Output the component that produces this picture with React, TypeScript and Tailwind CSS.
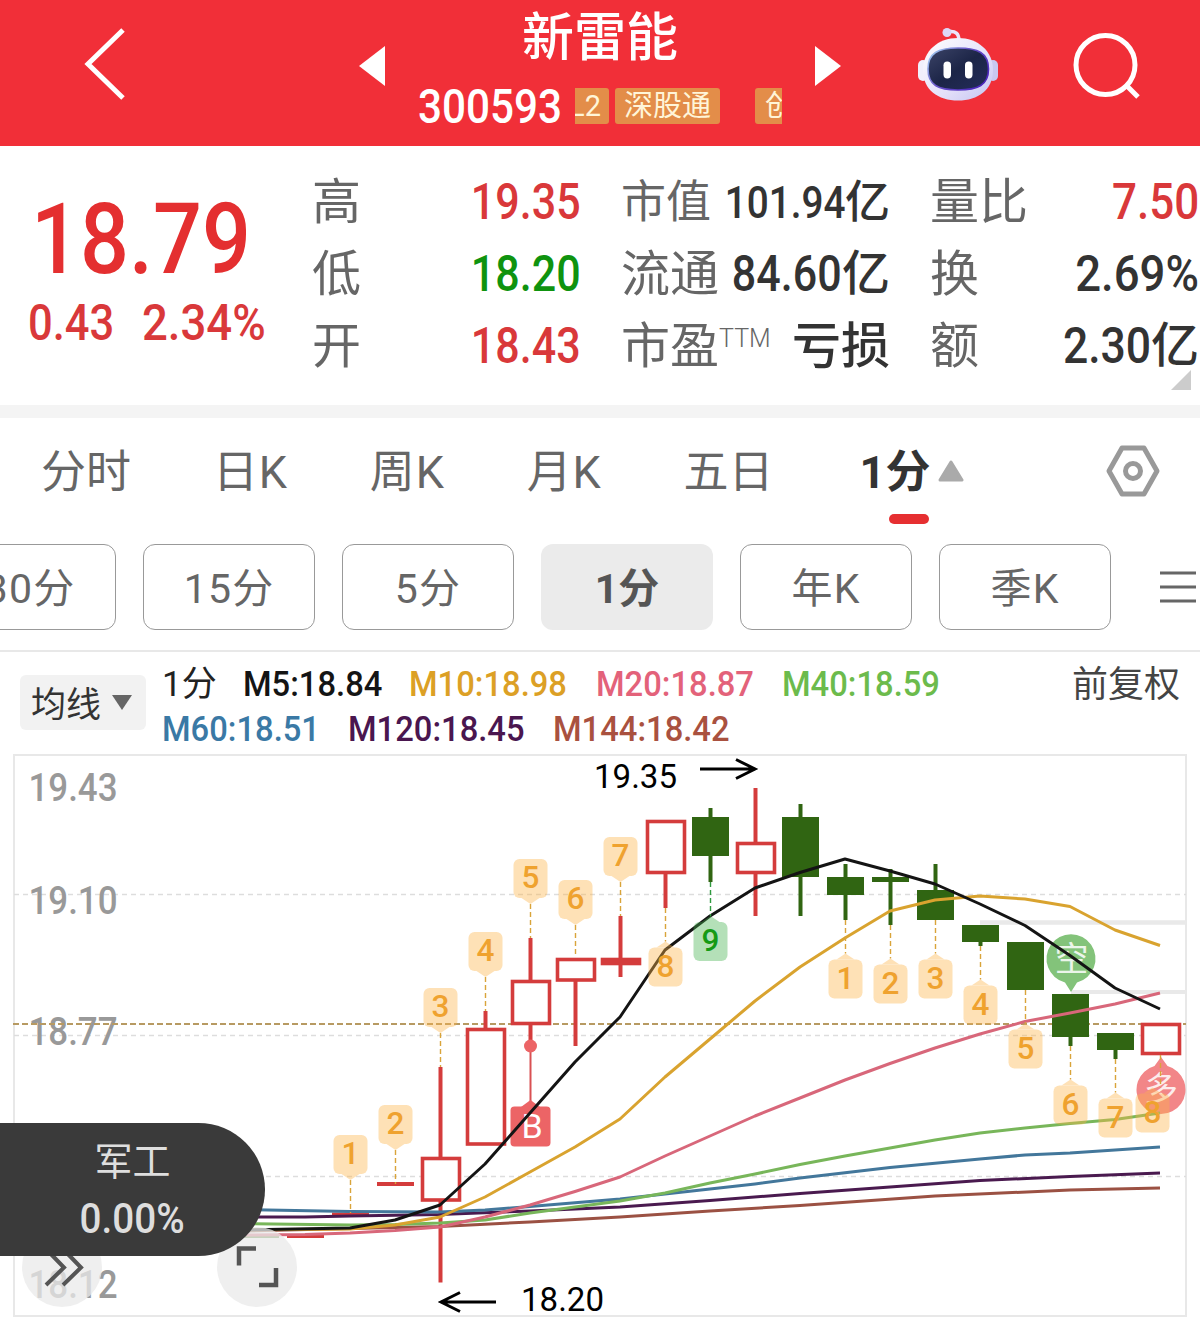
import type { ReactNode } from 'react'
import clsx from 'clsx'
import { twMerge } from 'tailwind-merge'

interface Candle {
  x: number
  top: number
  bottom: number
  high?: number
  low?: number
  up?: boolean
}

interface Marker {
  x: number
  label: string
  // y of the pointer tip and of the candle end it is tied to
  tip: number
  from: number
  below?: boolean
  green?: boolean
  boxX?: number
}

const candles: Candle[] = [
  { x: 440.5, top: 1156.5, bottom: 1202, high: 1067, low: 1282.5, up: true },
  { x: 485.5, top: 1027.5, bottom: 1146, high: 1011, up: true },
  { x: 530.5, top: 979.5, bottom: 1025.5, high: 938, low: 1046, up: true },
  { x: 575.5, top: 957.5, bottom: 982, low: 1046, up: true },
  { x: 620.5, top: 957.5, bottom: 965.5, high: 916, low: 977, up: true },
  { x: 665.5, top: 819.5, bottom: 874.5, low: 908, up: true },
  { x: 710.5, top: 817, bottom: 856, high: 808, low: 882 },
  { x: 755.5, top: 841.5, bottom: 874.5, high: 788, low: 916, up: true },
  { x: 800.5, top: 817, bottom: 877, high: 804, low: 916 },
  { x: 845.5, top: 877, bottom: 895, high: 864, low: 920 },
  { x: 890.5, top: 877, bottom: 882, high: 869, low: 925 },
  { x: 935.5, top: 890, bottom: 920, high: 864 },
  { x: 980.5, top: 925, bottom: 942, low: 946 },
  { x: 1025.5, top: 942, bottom: 990 },
  { x: 1070.5, top: 994, bottom: 1037, low: 1046 },
  { x: 1115.5, top: 1033, bottom: 1050, low: 1059 },
  { x: 1160.5, top: 1022.5, bottom: 1055.5, up: true },
]

const markers: Marker[] = [
  { x: 350.5, label: '1', tip: 1180, from: 1213 },
  { x: 395.5, label: '2', tip: 1150, from: 1184 },
  { x: 440.5, label: '3', tip: 1033, from: 1067 },
  { x: 485.5, label: '4', tip: 977, from: 1011 },
  { x: 530.5, label: '5', tip: 904, from: 938 },
  { x: 575.5, label: '6', tip: 925, from: 957 },
  { x: 620.5, label: '7', tip: 882, from: 916 },
  { x: 665.5, label: '8', tip: 941.5, from: 908, below: true },
  { x: 710.5, label: '9', tip: 916, from: 882, below: true, green: true },
  { x: 845.5, label: '1', tip: 953.5, from: 920, below: true },
  { x: 890.5, label: '2', tip: 958.5, from: 925, below: true },
  { x: 935.5, label: '3', tip: 953.5, from: 920, below: true },
  { x: 980.5, label: '4', tip: 979.5, from: 946, below: true },
  { x: 1025.5, label: '5', tip: 1023.5, from: 990, below: true },
  { x: 1070.5, label: '6', tip: 1079.5, from: 1046, below: true },
  { x: 1115.5, label: '7', tip: 1092.5, from: 1059, below: true },
  { x: 1160.5, label: '8', tip: 1087.5, from: 1055, below: true, boxX: 1152.5 },
]

const averages = [
  {
    color: '#9b5143',
    points: '240,1231 350,1228.5 440,1226.5 530,1222 620,1217 710,1211 800,1205.5 935,1196 1070,1190 1160,1188',
  },
  {
    color: '#4a1a4f',
    points: '240,1217 305,1217 350,1216 440,1214.5 530,1211 620,1207 710,1200.5 800,1193.5 890,1187 980,1180.5 1070,1176.5 1160,1173',
  },
  {
    color: '#43779b',
    points: '240,1209.5 350,1211.5 440,1212 485,1210 530,1206.5 620,1199 665,1194 710,1189 755,1184 800,1178 890,1167.5 980,1159 1025,1155 1070,1153 1160,1147',
  },
  {
    color: '#78b65a',
    points: '240,1223.5 350,1225 395,1224.5 440,1223 485,1220 530,1213 575,1207 620,1201 665,1193 710,1183 755,1174 800,1164.5 845,1156 890,1148 935,1140 980,1133 1025,1128 1070,1123.5 1115,1119.5 1160,1113',
  },
  {
    color: '#d8677a',
    points: '240,1235 305,1234.5 350,1233 395,1230.5 440,1227 485,1217 530,1205 575,1191.5 620,1177 665,1156 710,1136 755,1116 800,1098 845,1080 890,1063.5 935,1048 980,1034 1025,1021.5 1070,1013 1115,1004 1160,993',
  },
  {
    color: '#d9a32f',
    points: '240,1230 350,1229 395,1225 440,1217 485,1197 530,1172 575,1147 620,1119 665,1077 710,1039 755,1001 800,967 845,938 890,911 935,900 980,896 1025,899 1070,906.5 1115,930 1160,945.5',
  },
  {
    color: '#141414',
    points: '240,1230 350,1228 395,1220 440,1205 485,1164 530,1113 575,1062 620,1017 665,950 710,916 755,888 800,872.5 845,859 890,871 935,884 980,904 1025,925.5 1070,955.5 1115,988 1160,1009',
  },
]

const tabs = ['分时', '日K', '周K', '月K', '五日']
const periods = ['30分', '15分', '5分', '1分', '年K', '季K']

const legend = [
  [
    { text: 'M5:18.84', width: 'w-[139px]', color: 'text-[#141414]' },
    { text: 'M10:18.98', width: 'w-[160px]', color: 'text-[#dca025]' },
    { text: 'M20:18.87', width: 'w-[159px]', color: 'text-[#e3627a]' },
    { text: 'M40:18.59', width: 'w-[160px]', color: 'text-[#6cbb4c]' },
  ],
  [
    { text: 'M60:18.51', width: 'w-[159px]', color: 'text-[#3a79a5]' },
    { text: 'M120:18.45', width: 'w-[178px]', color: 'text-[#4a164f]' },
    { text: 'M144:18.42', width: 'w-[180px]', color: 'text-[#a9513f]' },
  ],
]

// Condensed figures, set against the right edge of their box
const Num = ({ className, children }: { className?: string; children: ReactNode }) => (
  <span
    className={twMerge(
      'mt-0.5 inline-block origin-right scale-x-[0.86] whitespace-nowrap text-[50px] font-medium',
      className,
      'leading-none'
    )}
  >
    {children}
  </span>
)

const Stat = ({ label, small, children }: { label: ReactNode; small?: boolean; children: ReactNode }) => (
  <div className="flex h-[72px] items-center justify-between whitespace-nowrap text-[#333]">
    <span className={clsx('mt-0.5 flex shrink-0 leading-none text-[#666]', small ? 'text-[45px]' : 'text-[49px]')}>
      {label}
    </span>
    <span className="-ml-12 flex items-center">{children}</span>
  </div>
)

const RobotIcon = () => (
  <svg className="h-[78px] w-[84px]" viewBox="0 0 84 78">
    <defs>
      <linearGradient id="shell" x1="0" y1="0" x2="1" y2="1">
        <stop offset="0" stopColor="#ffffff" />
        <stop offset="0.6" stopColor="#e4e0fa" />
        <stop offset="1" stopColor="#c3c4f0" />
      </linearGradient>
      <linearGradient id="visor" x1="0" y1="0" x2="1" y2="1">
        <stop offset="0" stopColor="#3c4468" />
        <stop offset="0.5" stopColor="#1c2547" />
        <stop offset="1" stopColor="#232c5a" />
      </linearGradient>
      <linearGradient id="rim" x1="0" y1="0" x2="1" y2="0.6">
        <stop offset="0" stopColor="#a9dcf5" />
        <stop offset="0.5" stopColor="#6a54c9" />
        <stop offset="1" stopColor="#4d28bd" />
      </linearGradient>
    </defs>
    <path d="M31 6 C40 4 43 8 43 15" fill="none" stroke="#ece6fb" strokeWidth="3.5" />
    <circle cx="31" cy="6.5" r="4.5" fill="#ded6f6" />
    <rect x="2" y="34" width="10" height="21" rx="5" fill="#f1effc" />
    <rect x="72" y="34" width="10" height="21" rx="5" fill="#c9c8f0" />
    <path
      d="M42 12 C62 12 77 25 77 44 C77 64 62 74.5 42 74.5 C22 74.5 7 64 7 44 C7 25 22 12 42 12Z"
      fill="url(#shell)"
    />
    <path
      d="M42 22 C62 22 72.5 27 72.5 43 C72.5 59 62 64 42 64 C22 64 12 59 12 43 C12 27 22 22 42 22Z"
      fill="url(#visor)"
      stroke="url(#rim)"
      strokeWidth="1.6"
    />
    <rect x="27.5" y="35.5" width="7.5" height="17" rx="3.7" fill="#fff" />
    <rect x="49" y="35.5" width="7.5" height="17" rx="3.7" fill="#fff" />
  </svg>
)

const Header = () => (
  <header className="flex h-[146px] bg-[#f12f38] text-white">
    <div className="flex w-[340px] pt-[26px] pl-[80px]">
      <svg className="h-[76px] w-[50px]" viewBox="0 0 50 76" fill="none" stroke="#fff" strokeWidth="5">
        <path d="M43 4 L8 38 L43 72" />
      </svg>
    </div>
    <div className="flex w-[45px] justify-end pt-[46px]">
      <svg className="h-10 w-[27px]" viewBox="0 0 27 40">
        <path d="M1 20 L27 0 V40Z" fill="#fff" />
      </svg>
    </div>
    <div className="flex w-[430px] flex-col items-center">
      <h1 className="mt-[11px] text-[52px] leading-[56px] font-medium">新雷能</h1>
      <div className="mt-5 flex h-[38px] w-full items-center pl-[33px]">
        <span className="flex w-[157px]">
          <Num className="origin-left scale-x-[0.88] text-[48px]">300593</Num>
        </span>
        <div className="flex h-9 w-[207px] overflow-hidden text-[29px] leading-[37px] whitespace-nowrap text-[#fff5d8]">
          <span className="flex w-[34px] shrink-0 justify-end rounded-r-[3px] bg-[#e38d49] pr-2">L2</span>
          <span className="ml-1.5 w-[105px] shrink-0 rounded-[3px] bg-[#e38d49] text-center">深股通</span>
          <span className="ml-[35px] w-[105px] shrink-0 rounded-[3px] bg-[#e38d49] pl-2.5">创业板</span>
        </div>
      </div>
    </div>
    <svg className="mt-[46px] h-10 w-[27px]" viewBox="0 0 27 40">
      <path d="M26 20 L0 0 V40Z" fill="#fff" />
    </svg>
    <div className="mt-[26px] ml-[74px]">
      <RobotIcon />
    </div>
    <svg className="mt-[30px] ml-[72px] h-[72px] w-[72px]" viewBox="0 0 72 72" fill="none" stroke="#fff" strokeWidth="5">
      <circle cx="33.5" cy="35" r="29.5" />
      <path d="M54 55 L66 67" />
    </svg>
  </header>
)

const Quote = () => (
  <section className="relative flex h-[259px] pt-[19px]">
    <div className="w-[312px] text-[#e42f30]">
      <div className="flex h-[124px] items-end pl-[31px]">
        <Num className="origin-left scale-x-[0.88] text-[98px]">18.79</Num>
      </div>
      <div className="mt-[7px] flex pl-[28px] text-[#d9383a]">
        <span className="flex w-[114px]">
          <Num className="origin-left scale-x-[0.87]">0.43</Num>
        </span>
        <Num className="origin-left scale-x-[0.91]">2.34%</Num>
      </div>
    </div>
    <div className="w-[269px]">
      <Stat label="高">
        <Num className="text-[#d9383a]">19.35</Num>
      </Stat>
      <Stat label="低">
        <Num className="text-[#0f930f]">18.20</Num>
      </Stat>
      <Stat label="开">
        <Num className="text-[#d9383a]">18.43</Num>
      </Stat>
    </div>
    <div className="ml-10 w-[269px]">
      <Stat label="市值" small>
        <Num className="text-[45px]">101.94</Num>
        <span className="mt-0.5 text-[45px] leading-none font-medium">亿</span>
      </Stat>
      <Stat label="流通">
        <Num>84.60</Num>
        <span className="mt-0.5 text-[48px] leading-none font-medium">亿</span>
      </Stat>
      <Stat
        label={
          <>
            市盈<sup className="top-0 mt-1 text-[25px] leading-none font-light">TTM</sup>
          </>
        }
      >
        <span className="mt-0.5 text-[49px] leading-none font-medium">亏损</span>
      </Stat>
    </div>
    <div className="ml-10 w-[269px]">
      <Stat label="量比">
        <Num className="scale-x-[0.88] text-[#d9383a]">7.50</Num>
      </Stat>
      <Stat label="换">
        <Num className="scale-x-[0.91]">2.69%</Num>
      </Stat>
      <Stat label="额">
        <Num className="scale-x-[0.89]">2.30</Num>
        <span className="mt-0.5 text-[48px] leading-none font-medium">亿</span>
      </Stat>
    </div>
    <svg className="absolute right-[9px] bottom-[15px] size-5" viewBox="0 0 20 20">
      <path d="M20 0 V20 H0Z" fill="#ccc" />
    </svg>
  </section>
)

const ChartTabs = () => (
  <nav className="border-b-2 border-[#e8e8e8] pb-5">
    <div className="flex h-[106px] items-center gap-[82px] pl-[41px] text-[45px] leading-none whitespace-nowrap text-[#666]">
      {tabs.map((tab) => (
        <span key={tab} className={clsx('pt-[3px]', tab.endsWith('K') && 'tracking-[0.8px]')}>
          {tab}
        </span>
      ))}
      <span className="relative ml-[4px] flex items-center pt-[3px] font-bold text-[#333]">
        1分
        <svg className="-mt-[3px] ml-2 h-[22px] w-[26px]" viewBox="0 0 26 22">
          <path d="M13 2 L24 20 H2Z" fill="#aaa" stroke="#aaa" strokeWidth="3" strokeLinejoin="round" />
        </svg>
        <i className="absolute -bottom-[29px] left-[29px] h-2.5 w-10 rounded-full bg-[#e62f31]" />
      </span>
      <svg
        className="mr-10 ml-auto h-[54px] w-[54px]"
        viewBox="0 0 54 54"
        fill="none"
        stroke="#999"
        strokeWidth="5"
        strokeLinejoin="round"
      >
        <path d="M16 4 H38 L51 27 L38 50 H16 L3 27Z" />
        <circle cx="27" cy="27" r="7.5" />
      </svg>
    </div>
    <div className="mt-5 flex items-center gap-[27px] text-[41px] text-[#666]">
      {periods.map((period, i) => (
        <span
          key={period}
          className={clsx(
            'flex h-[86px] w-[172px] shrink-0 items-center justify-center rounded-xl pt-[4px] leading-none',
            i === 0 && '-ml-14',
            period === '1分' ? 'bg-[#ebebeb] font-bold text-[#555]' : 'border border-[#999] tracking-[1.2px]'
          )}
        >
          {period}
        </span>
      ))}
      <svg className="ml-[22px] h-8 w-9 shrink-0" viewBox="0 0 36 32" stroke="#666" strokeWidth="3">
        <path d="M0 2 H36 M0 16 H36 M0 30 H36" />
      </svg>
    </div>
  </nav>
)

const Legend = () => (
  <div className="flex h-[100px] pl-5">
    <div className="mt-[23px] flex h-[55px] w-[126px] items-center rounded-md bg-[#f2f2f2] pl-[11px] text-[35px] leading-none text-[#333]">
      <span className="pt-[5px]">均线</span>
      <svg className="ml-2.5 h-[17px] w-[22px]" viewBox="0 0 22 17">
        <path d="M1 1 H21 L11 16Z" fill="#666" />
      </svg>
    </div>
    <div className="ml-[16px] pt-[10px] text-[35px] leading-[45px] font-medium">
      {legend.map((row, i) => (
        <div key={i} className="flex h-[45px] gap-[27px]">
          {i === 0 && <span className="w-[54px] whitespace-nowrap font-normal text-[#222]">1分</span>}
          {row.map((item) => (
            <span key={item.text} className={clsx('whitespace-nowrap', item.width, item.color)}>
              <span className="inline-block origin-left scale-x-[0.935]">{item.text}</span>
            </span>
          ))}
        </div>
      ))}
    </div>
    <span className="mr-5 ml-auto pt-[11px] text-[36px] leading-[45px] text-[#444]">前复权</span>
  </div>
)

const CandleShape = ({ x, top, bottom, high, low, up }: Candle) => {
  const color = up ? '#d43c3c' : '#306512'
  return (
    <g stroke={color} strokeWidth="4">
      {high && <path d={`M${x} ${high} V${top + 1}`} />}
      {low && <path d={`M${x} ${bottom - 1} V${low}`} />}
      {up ? (
        <rect
          x={x - 18}
          y={top + 2}
          width="37"
          height={bottom - top - 4}
          fill={bottom - top > 10 ? '#fff' : color}
          strokeWidth="3.6"
        />
      ) : (
        <rect x={x - 18.5} y={top} width="37" height={bottom - top} fill={color} stroke="none" />
      )}
    </g>
  )
}

const MarkerShape = ({ x, label, tip, from, below, green, boxX }: Marker) => {
  const cx = boxX ?? x
  const top = below ? tip + 6 : tip - 45
  const edge = below ? top : top + 39
  return (
    <g>
      <path
        d={`M${x} ${Math.min(tip, from)} V${Math.max(tip, from)}`}
        stroke={green ? '#2f9a3f' : '#d9a43a'}
        strokeWidth="1.4"
        strokeDasharray="5 3"
      />
      <g fill={green ? '#46b34f' : '#fdb54a'} opacity="0.4">
        <rect x={cx - 17} y={top} width="34" height="39" rx="6" />
        <path d={`M${cx - 9} ${edge} L${cx} ${tip} L${cx + 9} ${edge}Z`} />
      </g>
      <text x={cx} y={top + 29} textAnchor="middle" fontSize="31.5" fontWeight="500" fill={green ? '#159a15' : '#efa22f'}>
        {label}
      </text>
    </g>
  )
}

const AxisLabel = ({ y, children }: { y: number; children: string }) => (
  <text x="28.5" y={y} fontSize="38.5" fontWeight="500" fill="#999" textLength="89" lengthAdjust="spacingAndGlyphs">
    {children}
  </text>
)

const Chart = () => (
  <div className="relative h-[576px]">
    <svg className="block h-[576px] w-[1200px]" viewBox="0 752 1200 576" fill="none">
      <rect x="14" y="755" width="1172" height="561" stroke="#e8e8e8" strokeWidth="2" />
      <path d="M14 894.5 H1186 M14 1035.5 H1186 M14 1176.5 H1186" stroke="#ddd" strokeWidth="1.3" strokeDasharray="5 4" />
      <path d="M980 922.5 H1186" stroke="#e9e9e9" strokeWidth="4.5" />
      <path d="M1071 992 H1186" stroke="#e9e9e9" strokeWidth="4" />
      <AxisLabel y={801}>19.43</AxisLabel>
      <AxisLabel y={914}>19.10</AxisLabel>
      <AxisLabel y={1045}>18.77</AxisLabel>
      <AxisLabel y={1298}>18.12</AxisLabel>
      <path d="M13 1024 H1186" stroke="#b79a62" strokeWidth="1.8" strokeDasharray="6 3" />

      <path d="M242 1236.5 H279" stroke="#5f8a3c" strokeWidth="3" />
      <path d="M287 1236.5 H324 M332 1214 H369" stroke="#d43c3c" strokeWidth="3" />
      <path d="M377 1184 H414" stroke="#d43c3c" strokeWidth="4" />
      {candles.map((candle) => (
        <CandleShape key={candle.x} {...candle} />
      ))}

      {/* buy / long / short signals */}
      <g fill="#ec6466">
        <path d="M530.5 1046 V1102" stroke="#d95052" strokeWidth="2" />
        <circle cx="530.5" cy="1046" r="6.5" />
        <rect x="510.5" y="1106.5" width="40" height="40" rx="4" />
        <path d="M521 1107 L530.5 1100 L540 1107Z" />
      </g>
      <text x="532" y="1138" textAnchor="middle" fontSize="34" fill="#fff">
        B
      </text>
      <path d="M1071 992 L1065 982.5 A24.5 24.5 0 1 1 1077 982.5Z" fill="#83c37a" />
      <text x="1071.5" y="971" textAnchor="middle" fontSize="34" fill="#fff" fillOpacity="0.85">
        空
      </text>
      <path d="M1161 1057 L1154.5 1066 A24.5 24.5 0 1 0 1167.5 1066Z" fill="#f28688" />
      <text x="1161" y="1101" textAnchor="middle" fontSize="34" fill="#fff" fillOpacity="0.85">
        多
      </text>

      {averages.map((line) => (
        <polyline key={line.color} points={line.points} stroke={line.color} strokeWidth="3" strokeLinejoin="round" />
      ))}
      {markers.map((marker) => (
        <MarkerShape key={marker.x} {...marker} />
      ))}

      <g stroke="#000" strokeWidth="3">
        <path d="M700 769 H755 M736 759.5 L755 769 L736 778.5" />
        <path d="M496 1302 H441 M460 1292.5 L441 1302 L460 1311.5" />
      </g>
      <g fill="#000" fontSize="34">
        <text x="594" y="788" textLength="83" lengthAdjust="spacingAndGlyphs">
          19.35
        </text>
        <text x="521" y="1311" textLength="83" lengthAdjust="spacingAndGlyphs">
          18.20
        </text>
      </g>
    </svg>

    <div className="absolute top-[475px] left-[22px] size-20 rounded-full bg-[#e9e9e9]/75">
      <svg className="size-20" viewBox="0 0 80 80" fill="none" stroke="#555" strokeWidth="4">
        <path d="M25 23 L42 40.5 L24 58 M42 23 L59 40.5 L41 58" />
      </svg>
    </div>
    <div className="absolute top-[475px] left-[217px] size-20 rounded-full bg-[#e9e9e9]/75">
      <svg className="size-20" viewBox="0 0 80 80" fill="none" stroke="#555" strokeWidth="4.5">
        <path d="M22 38.5 V21.5 H39 M42 58 H59 V41" />
      </svg>
    </div>
    <div className="absolute top-[371px] left-0 flex h-[133px] w-[265px] flex-col items-center rounded-r-full bg-[#3a3a3a] pt-[20px] text-[38px] leading-[38px] text-[#dedede]">
      <span>军工</span>
      <Num className="mt-[17px] origin-center scale-x-[0.92] text-[42px]">0.00%</Num>
    </div>
  </div>
)

export default function App() {
  return (
    <div className="h-[1328px] w-[1200px] overflow-hidden bg-white font-['Roboto','Noto_Sans_CJK_SC',sans-serif]">
      <Header />
      <Quote />
      <div className="h-[13px] bg-[#f4f4f4]" />
      <ChartTabs />
      <Legend />
      <Chart />
    </div>
  )
}
